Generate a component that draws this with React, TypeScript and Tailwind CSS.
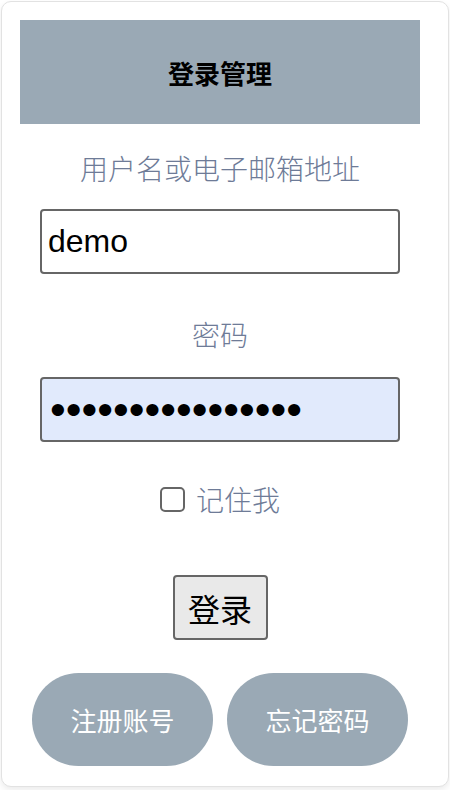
export default function App() {
  const cjk = { fontFamily: '"Noto Sans CJK SC", "Noto Sans", sans-serif' };
  return (
    <div className="w-[450px] h-[790px] bg-white p-px">
      <div
        className="h-[786px] rounded-[10px] border border-[#e2e2e2] bg-white pl-[18px] pt-[18px] shadow-[0_3px_6px_rgba(0,0,0,0.08)]"
        style={cjk}
      >
        <div className="w-[400px]">
          <header className="h-[104px] bg-[#9aa9b5] flex items-center justify-center">
            <h1 className="text-[26px] font-bold text-black">登录管理</h1>
          </header>

          <form className="flex flex-col items-center">
            <label className="mt-[24px] h-[40px] leading-[40px] text-[28px] font-light text-[#6e7b97]">
              用户名或电子邮箱地址
            </label>
            <input
              type="text"
              defaultValue="demo"
              className="mt-[21px] w-[360px] h-[65px] border-2 border-[#666] rounded-[4px] bg-white px-[6px] text-[32px] text-black outline-none"
              style={{ fontFamily: '"Liberation Sans", Arial, sans-serif' }}
            />

            <label className="mt-[40px] h-[40px] leading-[40px] text-[28px] font-light text-[#6e7b97]">
              密码
            </label>
            <input
              type="password"
              defaultValue="demodemodemodemo"
              className="mt-[23px] w-[360px] h-[65px] border-2 border-[#666] rounded-[4px] bg-[#e1eafc] px-[8px] text-[45px] text-black outline-none"
              style={{ fontFamily: '"Liberation Sans", Arial, sans-serif' }}
            />

            <div className="mt-[37px] h-[40px] flex items-center gap-[11px]">
              <span className="w-[25px] h-[25px] border-2 border-[#666] rounded-[5px] bg-white" />
              <span className="text-[28px] font-light text-[#6e7b97] leading-[40px]">记住我</span>
            </div>

            <button
              type="button"
              className="mt-[56px] w-[95px] h-[65px] border-2 border-[#666] rounded-[4px] bg-[#e9e9e9] text-[32px] text-black"
            >
              登录
            </button>

            <div className="mt-[33px] w-full flex justify-center gap-[14px]">
              <button
                type="button"
                className="w-[181px] h-[93px] rounded-full bg-[#9aa9b5] text-[26px] text-white"
              >
                注册账号
              </button>
              <button
                type="button"
                className="w-[181px] h-[93px] rounded-full bg-[#9aa9b5] text-[26px] text-white"
              >
                忘记密码
              </button>
            </div>
          </form>
        </div>
      </div>
    </div>
  );
}
